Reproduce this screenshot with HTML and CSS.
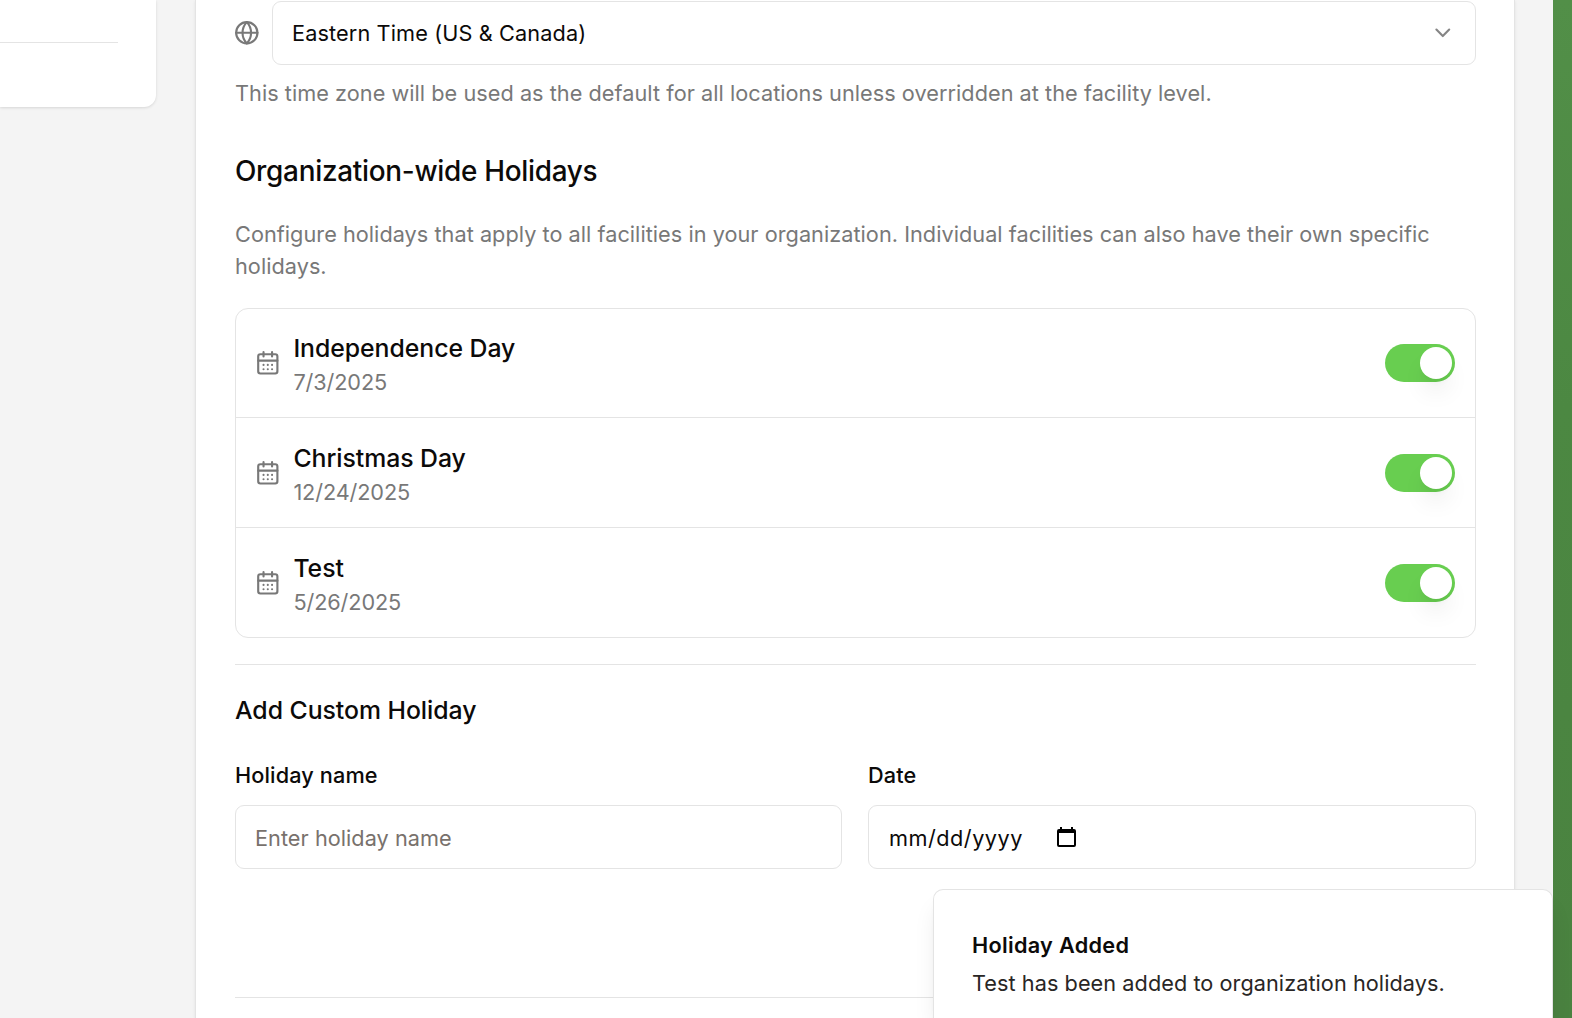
FILE: index.html
```html
<!DOCTYPE html>
<html lang="en">
<head>
<meta charset="utf-8">
<title>Organization Settings</title>
<link rel="stylesheet" href="styles.css">
</head>
<body>
<svg class="sprite" aria-hidden="true">
  <symbol id="calendar" viewBox="0 0 24 24">
    <path d="M8 2v4M16 2v4M3 10h18"/>
    <rect x="3" y="4" width="18" height="18" rx="2"/>
    <path d="M8 14h.01M12 14h.01M16 14h.01M8 18h.01M12 18h.01M16 18h.01"/>
  </symbol>
</svg>
<div class="app">
  <aside class="side-card"><div class="rule"></div></aside>
  <main class="card">
    <div class="zone">
      <svg class="icon" viewBox="0 0 24 24"><circle cx="12" cy="12" r="10"/><path d="M12 2a14.5 14.5 0 0 0 0 20 14.5 14.5 0 0 0 0-20M2 12h20"/></svg>
      <div class="field select">
        <span>Eastern Time (US &amp; Canada)</span>
        <svg class="icon chevron" viewBox="0 0 24 24"><path d="m6 9 6 6 6-6"/></svg>
      </div>
    </div>
    <p class="help">This time zone will be used as the default for all locations unless overridden at the facility level.</p>
    <h2 class="heading">Organization-wide Holidays</h2>
    <p class="intro">Configure holidays that apply to all facilities in your organization. Individual facilities can also have their own specific holidays.</p>
    <ul class="holidays">
      <li class="holiday">
        <svg class="icon"><use href="#calendar"/></svg>
        <div class="info"><div class="name">Independence Day</div><div class="date">7/3/2025</div></div>
        <div class="switch"><div class="thumb"></div></div>
      </li>
      <li class="holiday">
        <svg class="icon"><use href="#calendar"/></svg>
        <div class="info"><div class="name">Christmas Day</div><div class="date">12/24/2025</div></div>
        <div class="switch"><div class="thumb"></div></div>
      </li>
      <li class="holiday">
        <svg class="icon"><use href="#calendar"/></svg>
        <div class="info"><div class="name">Test</div><div class="date">5/26/2025</div></div>
        <div class="switch"><div class="thumb"></div></div>
      </li>
    </ul>
    <div class="rule"></div>
    <h3 class="subheading">Add Custom Holiday</h3>
    <div class="form">
      <div>
        <div class="label">Holiday name</div>
        <div class="field input placeholder">Enter holiday name</div>
      </div>
      <div>
        <div class="label">Date</div>
        <div class="field input date-field">
          <span>mm/dd/yyyy</span>
          <svg class="picker" viewBox="0 0 19 20"><path fill-rule="evenodd" d="M3 0h2v2h9V0h2v2h1a2 2 0 0 1 2 2v14a2 2 0 0 1-2 2H2a2 2 0 0 1-2-2V4a2 2 0 0 1 2-2h1zM2 6v12h15V6z"/></svg>
        </div>
      </div>
    </div>
    <div class="rule foot"></div>
  </main>
</div>
<div class="toast">
  <div class="toast-title">Holiday Added</div>
  <div class="toast-text">Test has been added to organization holidays.</div>
</div>
</body>
</html>
```
FILE: styles.css
```css
* { box-sizing: border-box; }

body {
  margin: 0;
  height: 1018px;
  overflow: hidden;
  position: relative;
  background: linear-gradient(#528f48, #4c8842 40%, #4a8240);
  font-family: Inter, "Liberation Sans", sans-serif;
  font-size: 21.7px;
  line-height: 32px;
  color: #0c0a09;
}

h2, h3, p, ul { margin: 0; padding: 0; }
h2, h3 { font-weight: 500; }
.sprite { position: absolute; width: 0; height: 0; }

.app {
  display: flex;
  align-items: flex-start;
  gap: 39px;
  width: 1553px;
  height: 1018px;
  background: #f4f4f4;
}

.side-card {
  width: 156px;
  height: 107px;
  padding: 42px 38px 0 0;
  background: #fff;
  border-radius: 0 0 12px 0;
  box-shadow: 0 1px 3px rgba(0, 0, 0, .12);
}

.rule { height: 1px; background: #e4e4e4; }

.card {
  width: 1320px;
  height: 1018px;
  padding: 1px 38px 0 39px;
  background: #fff;
  border: 1px solid #e4e4e4;
  border-width: 0 1px;
  box-shadow: 0 1px 3px rgba(0, 0, 0, .08);
}

.icon {
  flex: none;
  width: 25.6px;
  height: 25.6px;
  fill: none;
  stroke: #787878;
  stroke-width: 2;
  stroke-linecap: round;
  stroke-linejoin: round;
}

.field {
  display: flex;
  align-items: center;
  height: 64px;
  padding: 0 19px;
  border: 1px solid #e4e4e4;
  border-radius: 9px;
  background: #fff;
}
.input { padding-top: 2px; }

.zone { display: flex; align-items: center; gap: 11.4px; }
.zone > .icon { margin-left: -.6px; margin-right: .6px; }
.select { flex: 1; justify-content: space-between; letter-spacing: .12px; }
.chevron { stroke: #858585; }

.help { margin-top: 12px; color: #787878; white-space: nowrap; letter-spacing: .037px; }
.heading { margin-top: 42px; font-size: 27.9px; line-height: 40px; letter-spacing: -.28px; }
.intro { margin-top: 27px; color: #787878; letter-spacing: .033px; }

.holidays {
  margin-top: 26px;
  border: 1px solid #e4e4e4;
  border-radius: 13px;
  list-style: none;
}

.holiday {
  display: flex;
  align-items: center;
  gap: 12.8px;
  height: 108px;
  padding: 0 20px 0 19px;
}
.holiday + .holiday { height: 110px; border-top: 1px solid #e4e4e4; }
.info { flex: 1; padding-top: 2px; }
.holiday + .holiday .info { padding-top: 3px; }
.name { font-size: 24.8px; line-height: 36px; font-weight: 500; letter-spacing: -.04px; }
.date { color: #787878; letter-spacing: -.12px; }

.switch {
  width: 70px;
  height: 38px;
  padding: 3px;
  border-radius: 19px;
  background: #68ce50;
}
.thumb {
  width: 32px;
  height: 32px;
  margin-left: 32px;
  border-radius: 50%;
  background: #fff;
  box-shadow: 0 16px 24px -5px rgba(0, 0, 0, .1), 0 6px 10px -6px rgba(0, 0, 0, .1);
}

.holidays + .rule { margin-top: 26px; }
.subheading { margin-top: 26px; font-size: 24.8px; line-height: 38px; letter-spacing: -.04px; }
.form { display: grid; grid-template-columns: 607px 608px; gap: 26px; margin-top: 30px; }
.label { font-weight: 500; margin-bottom: 14px; letter-spacing: .12px; }
.placeholder { color: #78716c; letter-spacing: .04px; }
.date-field { padding-left: 20px; letter-spacing: .5px; }
.picker { width: 19px; height: 20px; margin: 0 0 2px 34px; }
.foot { margin-top: 128px; }

.toast {
  position: absolute;
  left: 933px;
  top: 889px;
  width: 620px;
  height: 129px;
  padding: 39px 38px 0;
  border: 1px solid #e4e4e4;
  border-bottom: 0;
  border-radius: 10px 10px 0 0;
  background: #fff;
  box-shadow: 0 16px 24px -5px rgba(0, 0, 0, .1), 0 6px 10px -6px rgba(0, 0, 0, .1);
}
.toast-title { font-weight: 600; letter-spacing: .29px; }
.toast-text { margin-top: 6px; color: #292625; letter-spacing: .05px; }
```
